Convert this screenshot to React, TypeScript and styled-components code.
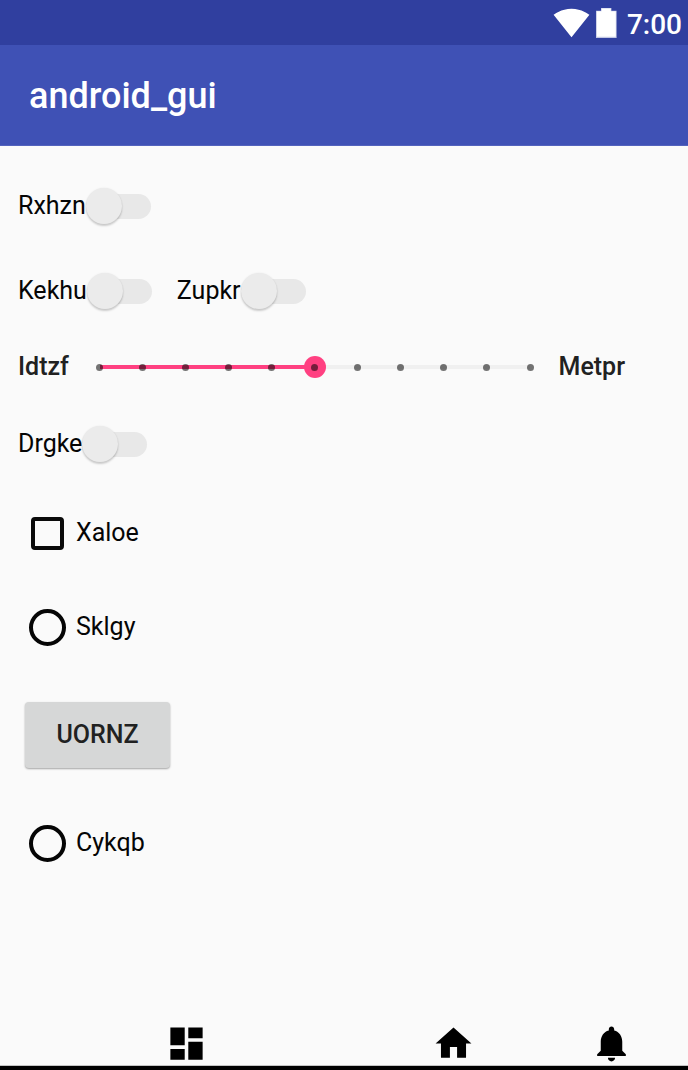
import React, { useState } from "react";
import styled, { createGlobalStyle } from "styled-components";

const GlobalStyle = createGlobalStyle`
  *, *::before, *::after { box-sizing: border-box; }
  body {
    margin: 0;
    background: #fafafa;
    color: #050505;
    font: 400 25px/32px Roboto, sans-serif;
  }
  input, button { font: inherit; margin: 0; }
`;

const Screen = styled.div`
  min-height: 100vh;
  display: flex;
  flex-direction: column;
  border-bottom: 4px solid #000;
`;

const StatusBar = styled.div`
  height: 45px;
  padding: 0 6px 0 0;
  display: flex;
  justify-content: flex-end;
  align-items: center;
  background: #303f9f;
  color: #fff;
`;

const Clock = styled.time`
  margin-left: 5px;
  padding-top: 4px;
  font-size: 28px;
  font-weight: 500;
`;

const AppBar = styled.header`
  height: 101px;
  padding: 2px 29px 0;
  display: flex;
  align-items: center;
  background: #3f51b5;
  border-bottom: 1px solid #5363bd;
  color: #fff;
`;

const Title = styled.h1`
  margin: 0;
  font-size: 36px;
  line-height: 44px;
  font-weight: 500;
`;

const Content = styled.main`
  flex: 1;
  padding: 18px 18px 0;
`;

const Row = styled.div<{ $height: number; $inset?: number }>`
  min-height: ${(p) => p.$height}px;
  padding-left: ${(p) => p.$inset ?? 0}px;
  display: flex;
  align-items: center;
`;

const SwitchLabel = styled.label`
  display: flex;
  align-items: center;
  margin-right: 25px;
`;

const SwitchInput = styled.input`
  appearance: none;
  display: flex;
  align-items: center;
  width: 65px;
  height: 25px;
  border-radius: 13px;
  background: #e8e8e8;

  &::before {
    content: "";
    flex: none;
    width: 36px;
    height: 36px;
    border-radius: 50%;
    background: #ebebeb;
    box-shadow: 0 2px 2px rgba(0, 0, 0, 0.18), 0 0 2px rgba(0, 0, 0, 0.08);
  }
  &:checked::before { margin-left: auto; background: #ff4081; }
`;

const SliderLabel = styled.label`
  font-weight: 500;
  color: #212121;
`;

const SliderBox = styled.div`
  position: relative;
  flex: 1;
  display: flex;
  margin: 0 18px 0 20px;
`;

const SliderInput = styled.input`
  appearance: none;
  width: 100%;
  height: 22px;
  background: transparent;

  &::-webkit-slider-runnable-track {
    height: 4px;
    background: linear-gradient(
      to right,
      transparent 11px,
      #ff4081 11px,
      #ff4081 var(--fill),
      #f0f0f0 var(--fill),
      #f0f0f0 calc(100% - 11px),
      transparent calc(100% - 11px)
    );
  }
  &::-webkit-slider-thumb {
    appearance: none;
    width: 22px;
    height: 22px;
    margin-top: -9px;
    border-radius: 50%;
    background: #ff4081;
  }
`;

const Ticks = styled.div`
  position: absolute;
  inset: 0 7px;
  display: flex;
  justify-content: space-between;
  align-items: center;
  pointer-events: none;
`;

const Tick = styled.span`
  width: 7px;
  height: 7px;
  border-radius: 50%;
  background: rgba(0, 0, 0, 0.54);
`;

const ChoiceLabel = styled.label`
  display: flex;
  align-items: center;
  gap: 10px;
`;

const CheckInput = styled.input`
  appearance: none;
  width: 33px;
  height: 33px;
  margin: 2px;
  border: 4px solid #0a0a0a;
  border-radius: 4px;
  &:checked { background: #ff4081; }
`;

const RadioInput = styled.input`
  appearance: none;
  width: 37px;
  height: 37px;
  border: 4px solid #050505;
  border-radius: 50%;
  &:checked { background: radial-gradient(#ff4081 9px, transparent 10px); }
`;

const RaisedButton = styled.button`
  width: 145px;
  height: 66px;
  padding: 0;
  border: 0;
  border-radius: 4px;
  background: #d6d7d7;
  box-shadow: 0 1px 2px rgba(0, 0, 0, 0.35);
  color: #212121;
  font-weight: 500;
`;

const NavBar = styled.nav`
  display: grid;
  grid-template-columns: 1fr 162px 154px;
  justify-items: center;
  padding-top: 8px;
  border-bottom: 1px solid #c4c4c4;
`;

const NavButton = styled.button`
  display: flex;
  padding: 0;
  border: 0;
  background: none;
  color: #000;
`;

function Switch({ label }: { label: string }) {
  return (
    <SwitchLabel>
      {label}
      <SwitchInput type="checkbox" role="switch" />
    </SwitchLabel>
  );
}

function StepSlider({ min, max, steps }: { min: string; max: string; steps: number }) {
  const [value, setValue] = useState(5);
  const ratio = value / steps;
  const style = {
    "--fill": `calc(11px + (100% - 22px) * ${ratio})`,
  } as React.CSSProperties;
  return (
    <>
      <SliderLabel htmlFor="level">{min}</SliderLabel>
      <SliderBox>
        <SliderInput
          id="level"
          type="range"
          min={0}
          max={steps}
          value={value}
          onChange={(e) => setValue(Number(e.target.value))}
          style={style}
        />
        <Ticks>
          {Array.from({ length: steps + 1 }, (_, i) => (
            <Tick key={i} />
          ))}
        </Ticks>
      </SliderBox>
      <SliderLabel htmlFor="level">{max}</SliderLabel>
    </>
  );
}

const SliderRow = styled(Row)`
  padding-right: 45px;
`;

const navItems = [
  { name: "Dashboard", path: "M3 13h8V3H3v10zm0 8h8v-6H3v6zm10 0h8V11h-8v10zm0-18v6h8V3h-8z" },
  { name: "Home", path: "M10 20v-6h4v6h5v-8h3L12 3 2 12h3v8z" },
  {
    name: "Notifications",
    path: "M12 22c1.1 0 2-.9 2-2h-4c0 1.1.89 2 2 2zm6-6v-5c0-3.07-1.64-5.64-4.5-6.32V4c0-.83-.67-1.5-1.5-1.5s-1.5.67-1.5 1.5v.68C7.63 5.36 6 7.92 6 11v5l-2 2v1h16v-1l-2-2z",
  },
];

export default function App() {
  return (
    <Screen>
      <GlobalStyle />
      <StatusBar>
        <svg width="37" height="37" viewBox="0 0 24 24" fill="#fff" aria-hidden="true">
          <path d="M12.01 21.49L23.64 7c-.45-.34-4.93-4-11.64-4C5.28 3 .81 6.66.36 7l11.63 14.49.01.01.01-.01z" />
        </svg>
        <svg width="32" height="30" viewBox="0 0 32 30" aria-hidden="true">
          <path d="M6 2.7h5V0h10.4v2.7h5.2V30H6z" fill="#c3c8e4" />
          <path d="M6.8 3.3h4.8V.5h9.2v2.8h5v25.5h-19z" fill="#fff" />
        </svg>
        <Clock>7:00</Clock>
      </StatusBar>
      <AppBar>
        <Title>android_gui</Title>
      </AppBar>
      <Content>
        <Row $height={84}>
          <Switch label="Rxhzn" />
        </Row>
        <Row $height={86}>
          <Switch label="Kekhu" />
          <Switch label="Zupkr" />
        </Row>
        <SliderRow $height={66}>
          <StepSlider min="Idtzf" max="Metpr" steps={10} />
        </SliderRow>
        <Row $height={88}>
          <Switch label="Drgke" />
        </Row>
        <Row $height={90} $inset={11}>
          <ChoiceLabel>
            <CheckInput type="checkbox" />
            Xaloe
          </ChoiceLabel>
        </Row>
        <Row $height={98} $inset={11}>
          <ChoiceLabel>
            <RadioInput type="radio" name="first" />
            Sklgy
          </ChoiceLabel>
        </Row>
        <Row $height={118} $inset={7}>
          <RaisedButton type="button">UORNZ</RaisedButton>
        </Row>
        <Row $height={98} $inset={11}>
          <ChoiceLabel>
            <RadioInput type="radio" name="second" />
            Cykqb
          </ChoiceLabel>
        </Row>
      </Content>
      <NavBar>
        {navItems.map((item) => (
          <NavButton key={item.name} type="button" aria-label={item.name}>
            <svg width="43" height="43" viewBox="0 0 24 24" fill="currentColor" aria-hidden="true">
              <path d={item.path} />
            </svg>
          </NavButton>
        ))}
      </NavBar>
    </Screen>
  );
}
